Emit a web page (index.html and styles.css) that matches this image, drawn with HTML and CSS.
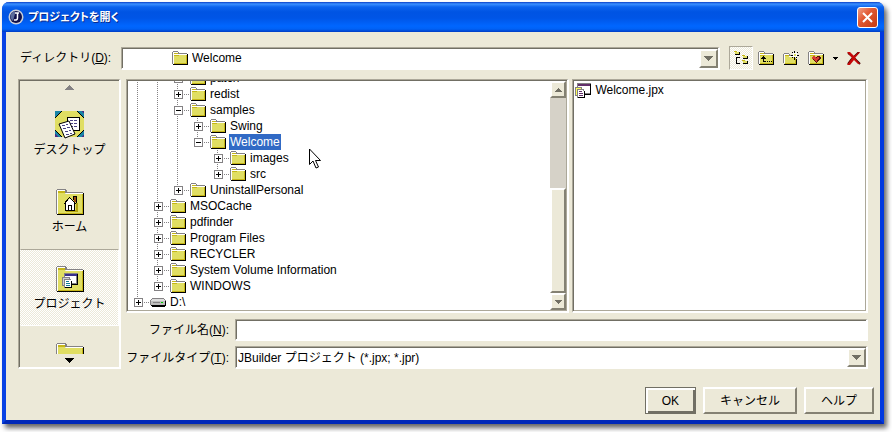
FILE: index.html
```html
<!DOCTYPE html>
<html lang="ja">
<head>
<meta charset="utf-8">
<title>プロジェクトを開く</title>
	<link rel="stylesheet" href="styles.css">
</head>
<body>

	<svg class="defs" width="0" height="0">
		<defs>
			<symbol id="folder" viewBox="0 0 16 14">
				<path fill="#848284" d="M1 0h5v1h1v1h8v1H0V1h1z"/>
				<path fill="#848284" d="M0 1h1v12H0z"/>
				<path fill="#fff" d="M1 1h5v1H1zM1 3h14v1H1zM1 2h1v11H1z"/>
				<path fill="#c6b618" d="M2 2h4v1H2z"/>
				<path fill="#e0de63" d="M2 4h12v8H2z"/>
				<path fill="#c6b618" d="M2 4h5v1H2zM14 4h1v9h-1zM2 12h13v1H2z"/>
				<path d="M15 3h1v11H1v-1h14z"/>
			</symbol>
			<symbol id="bigfolder" viewBox="0 0 28 26">
				<path fill="#848284" d="M1 0h9v1h1v2h16v1H9V1H1v24H0V1h1z"/>
				<path fill="#fff" d="M1 1h8v1H2v23H1zM10 4h17v1H10z"/>
				<path fill="#e0de63" d="M2 3h7v2h17v19H2z"/>
				<path fill="#c6b618" d="M2 2h7v2H2zM26 5h1v20H2v-1h24z"/>
				<path d="M27 4h1v22H1v-1h26z"/>
			</symbol>
			<symbol id="drive" viewBox="0 0 16 9">
				<path fill="#848284" d="M2 0h12v1h1v1h1v5H0V2h1V1h1z"/>
				<path fill="#dedede" d="M3 1h11v1H2V1zM1 2h14v1H1z"/>
				<path fill="#bdbdbd" d="M1 3h14v4H1z"/>
				<path fill="#848284" d="M3 4h7v1H3z"/>
				<path fill="#00d200" d="M11 4h2v1h-2z"/>
				<path d="M15 3h1v5h-1v1H2V8H1V7h14z"/>
			</symbol>
			<symbol id="project" viewBox="0 0 16 15">
				<path fill="#848284" d="M2 0h14v11H2z"/>
				<path fill="#fff" d="M3 3h12v7H3z"/>
				<path fill="#63306b" d="M3 1h12v2H3z"/>
				<path d="M15 1h1v11H9v-1h6z"/>
				<path fill="#848284" d="M0 4h7v9H0z"/>
				<path fill="#ffff5a" d="M1 5h5v7H1z"/>
				<path fill="#848284" d="M2 6h7v9H2z"/>
				<path fill="#fff" d="M3 7h5v1h1v6H3z"/>
				<path fill="#63306b" d="M4 8h3v1H4zM4 10h4v1H4zM4 12h4v1H4z"/>
				<path d="M9 8h1v7H3v-1h6z"/>
			</symbol>
			<symbol id="down" viewBox="0 0 9 5">
				<path d="M0 0h9v1H8v1H7v1H6v1H5v1H4V4H3V3H2V2H1V1H0z"/>
			</symbol>
			<symbol id="up" viewBox="0 0 9 5">
				<path d="M4 0h1v1h1v1h1v1h1v1h1v1H0V4h1V3h1V2h1V1h1z"/>
			</symbol>
		</defs>
	</svg>

	<div class="dialog">
		<header class="titlebar">
			<svg class="logo" width="16" height="16" viewBox="0 0 16 16">
				<circle cx="8" cy="8" r="7.5" fill="#c9ced8"/>
				<circle cx="8" cy="8" r="6" fill="#10104a"/>
				<path d="M3 5a6 6 0 0 1 4-3v3L5 12a6 6 0 0 1-2-7z" fill="#5c6c9c"/>
				<path d="M7 4h4M9.500 4v5q0 2.500-3.500 2" fill="none" stroke="#fff" stroke-width="1.500"/>
			</svg>
			<h1>プロジェクトを開く</h1>
			<button class="close" aria-label="閉じる">
				<svg width="11" height="11" viewBox="0 0 11 11"><path d="M1 1l9 9M10 1l-9 9" stroke="#fff" stroke-width="2"/></svg>
			</button>
		</header>

		<form class="content" onsubmit="return false">
			<div class="lookin">
				<label for="dir">ディレクトリ(<u>D</u>):</label>
				<div class="combo dir">
					<select id="dir"><option>Welcome</option></select>
					<svg class="dir-icon" width="16" height="14"><use href="#folder"/></svg>
					<span class="drop"><svg width="9" height="5"><use href="#down"/></svg></span>
				</div>
				<div class="tools">
					<button class="tool on" aria-label="ツリー">
						<svg width="15" height="14" viewBox="0 0 15 14">
							<path fill="#e0de63" d="M1 1h5v2H1zM9 5h4v2H9zM9 10h4v2H9z"/>
							<path fill="#c6b618" d="M0 0h3v1H0zM8 4h3v1H8zM8 9h3v1H8z"/>
							<path d="M5 1h1v3H1V3h4zM13 5h1v3H9V7h4zM13 10h1v3H9v-1h4zM2 6h4v1H3v5h3v1H2z"/>
						</svg>
					</button>
					<button class="tool" aria-label="上へ">
						<svg width="16" height="14" viewBox="0 0 16 14">
							<use href="#folder"/>
							<path d="M5 5h1v1h1v1h1v1H6v2h2v1H5V8H3V7h1V6h1zM9 10h1v1H9zM11 10h1v1h-1zM13 10h1v1h-1z"/>
						</svg>
					</button>
					<button class="tool" aria-label="新規フォルダ">
						<svg width="16" height="14" viewBox="0 0 16 14">
							<path fill="#848284" d="M1 2h5v1h1v1h6v1H1v7H0V3h1z"/>
							<path fill="#fff" d="M1 3h5v1H2v8H1zM6 5h8v1H6z"/>
							<path fill="#e0de63" d="M2 5h4v1h6v6H2z"/>
							<path fill="#c6b618" d="M2 4h4v1H2zM12 7h1v6H2v-1h10z"/>
							<path d="M13 8h1v6H1v-1h12z"/>
							<path fill="#fff" d="M10 2h4v4h-4z"/>
							<path d="M11 0h1v2h-1zM9 1h1v1H9zM14 1h1v1h-1zM8 4h2v1H8zM14 4h2v1h-2zM9 6h1v1H9zM13 6h1v1h-1zM11 6h1v3h-1z"/>
							<path fill="#e0de63" d="M11 3h2v2h-2z"/>
						</svg>
					</button>
					<button class="tool" aria-label="お気に入り">
						<svg width="16" height="14" viewBox="0 0 16 14">
							<use href="#folder"/>
							<path fill="#5a1010" d="M5 5h2v1h2V5h3v1h1v2h-1v1h-1v1h-1v1H9v1H8v-1H7v-1H6V9H5V8H4V6h1z"/>
							<path fill="#d63c31" d="M5 5h2v1h1v1h1V6h2v2h-1v1H9v2H8v-1H7V9H6V8H4V6h1z"/>
						</svg>
					</button>
					<button class="tool more" aria-label="お気に入りメニュー">
						<svg width="5" height="3" viewBox="0 0 5 3"><path d="M0 0h5v1H4v1H3v1H2V2H1V1H0z"/></svg>
					</button>
					<button class="tool" aria-label="削除">
						<svg class="smooth" width="15" height="13" viewBox="0 0 15 13">
							<path d="M12 0L4 8 1 12M1 1l4 3 8 8" fill="none" stroke="#4a0000" stroke-width="2"/>
							<path d="M0 0h3l4 4 5-4h1L8 6l5 6h-2L7 8l-4 5H0l5-7z" fill="#c60808"/>
						</svg>
					</button>
				</div>
			</div>

			<div class="main">
				<nav class="places">
					<button class="scroll" aria-label="上にスクロール" disabled><svg width="9" height="5"><use href="#up"/></svg></button>
					<div class="places-view">
						<button class="place">
							<svg width="29" height="28" viewBox="0 0 29 28">
								<path fill="#e0de63" d="M0 0h29v26H0z"/>
								<path fill="#1884a5" d="M0 0h7L0 7zM22 0h7v7zM0 19l7 7H0zM29 19v7h-7z"/>
								<path fill="#4a2c84" d="M0 23l3 3H0zM29 23v3h-3zM26 0h3v3z"/>
								<path fill="none" stroke="#000" d="M7 0L0 7M22 0l7 7M0 19l7 7M29 19l-7 7"/>
								<path fill="#fff" stroke="#000" d="M12.500 6.500h12v13h-12z"/>
								<path fill="none" stroke="#4a4284" stroke-dasharray="3 1" d="M15 9.500h7M15 12.500h7M15 15.500h7"/>
								<path class="smooth" fill="#fff" stroke="#000" d="M4 13l10-3 6 13-10 4z"/>
								<path fill="none" stroke="#4a4284" stroke-dasharray="3 1" d="M7 15l6-2M8 18l7-2M10 21l6-2M11 24l6-2"/>
							</svg>
							<span>デスクトップ</span>
						</button>
						<button class="place">
							<svg width="28" height="26" viewBox="0 0 28 26">
								<use href="#bigfolder"/>
								<path fill="#b5a510" d="M10 21h12v2H10zM20 14h2v8h-2z"/>
								<path fill="#fff" d="M9 14l5-5 5 5v7H9z"/>
								<path fill="#9c4a10" d="M18 8h2v5h-2z"/>
								<path d="M17 8h1v3h-1zM20 8h1v6h-1zM17 7h4v1h-4z"/>
								<path fill="none" stroke="#000" d="M7.500 15.500l6-7 7 7M9.500 14v7.500h9V14M12.500 21v-5h3v5"/>
							</svg>
							<span>ホーム</span>
						</button>
						<button class="place current">
							<svg width="28" height="26" viewBox="0 0 28 26">
								<use href="#bigfolder"/>
								<path fill="#848284" d="M8 7h14v11H8z"/>
								<path fill="#fff" d="M9 10h11v7H9z"/>
								<path fill="#39308c" d="M9 8h12v2H9z"/>
								<path d="M21 8h1v11h-7v-1h6z"/>
								<path fill="#848284" d="M6 11h8v9H6z"/>
								<path fill="#cecece" d="M7 12h6v7H7z"/>
								<path fill="#848284" d="M8 13h7v9H8z"/>
								<path fill="#fff" d="M9 14h6v7H9z"/>
								<path fill="#107b94" d="M10 15h3v1h-3zM10 17h4v1h-4zM10 19h4v1h-4z"/>
								<path d="M15 15h1v7H9v-1h6z"/>
							</svg>
							<span>プロジェクト</span>
						</button>
						<button class="place" aria-label="フォルダ">
							<svg width="28" height="26"><use href="#bigfolder"/></svg>
						</button>
					</div>
					<button class="scroll" aria-label="下にスクロール"><svg width="9" height="5"><use href="#down"/></svg></button>
				</nav>

				<div class="right">
					<div class="panes">
						<div class="pane tree-pane">
							<ul class="tree">
								<li><i></i><i></i><button class="box minus" aria-label="patch"></button><svg width="16" height="14"><use href="#folder"/></svg><span>patch</span></li>
								<li><i></i><i></i><button class="box" aria-label="redist"></button><svg width="16" height="14"><use href="#folder"/></svg><span>redist</span></li>
								<li><i></i><i></i><button class="box minus" aria-label="samples"></button><svg width="16" height="14"><use href="#folder"/></svg><span>samples</span></li>
								<li><i></i><i></i><i></i><button class="box" aria-label="Swing"></button><svg width="16" height="14"><use href="#folder"/></svg><span>Swing</span></li>
								<li><i></i><i></i><i></i><button class="box minus end" aria-label="Welcome"></button><svg width="16" height="14"><use href="#folder"/></svg><span class="selected">Welcome</span></li>
								<li><i></i><i></i><i></i><i class="none"></i><button class="box" aria-label="images"></button><svg width="16" height="14"><use href="#folder"/></svg><span>images</span></li>
								<li><i></i><i></i><i></i><i class="none"></i><button class="box end" aria-label="src"></button><svg width="16" height="14"><use href="#folder"/></svg><span>src</span></li>
								<li><i></i><i></i><button class="box end" aria-label="UninstallPersonal"></button><svg width="16" height="14"><use href="#folder"/></svg><span>UninstallPersonal</span></li>
								<li><i></i><button class="box" aria-label="MSOCache"></button><svg width="16" height="14"><use href="#folder"/></svg><span>MSOCache</span></li>
								<li><i></i><button class="box" aria-label="pdfinder"></button><svg width="16" height="14"><use href="#folder"/></svg><span>pdfinder</span></li>
								<li><i></i><button class="box" aria-label="Program Files"></button><svg width="16" height="14"><use href="#folder"/></svg><span>Program Files</span></li>
								<li><i></i><button class="box" aria-label="RECYCLER"></button><svg width="16" height="14"><use href="#folder"/></svg><span>RECYCLER</span></li>
								<li><i></i><button class="box" aria-label="System Volume Information"></button><svg width="16" height="14"><use href="#folder"/></svg><span>System Volume Information</span></li>
								<li><i></i><button class="box end" aria-label="WINDOWS"></button><svg width="16" height="14"><use href="#folder"/></svg><span>WINDOWS</span></li>
								<li><button class="box end" aria-label="D:\"></button><svg width="16" height="9"><use href="#drive"/></svg><span>D:\</span></li>
							</ul>
							<div class="scrollbar">
								<button aria-label="上"><svg width="7" height="4" viewBox="0 0 9 5"><use href="#up"/></svg></button>
								<div class="track"><div class="thumb"></div></div>
								<button aria-label="下"><svg width="7" height="4" viewBox="0 0 9 5"><use href="#down"/></svg></button>
							</div>
							<svg class="pointer" width="12" height="21" viewBox="0 0 12 21">
								<path fill="#fff" stroke="#000" d="M.5 1v15.500L4 13l3 7 2.500-1-3-6.500h5z"/>
							</svg>
						</div>
						<div class="pane files">
							<a href="#"><svg width="16" height="15"><use href="#project"/></svg>Welcome.jpx</a>
						</div>
					</div>

					<div class="fields">
						<label for="fname">ファイル名(<u>N</u>):</label>
						<input id="fname" type="text" autofocus autocomplete="off">
						<label for="ftype">ファイルタイプ(<u>T</u>):</label>
						<div class="combo">
							<select id="ftype"><option>JBuilder プロジェクト (*.jpx; *.jpr)</option></select>
							<span class="drop"><svg width="9" height="5"><use href="#down"/></svg></span>
						</div>
					</div>
				</div>
			</div>

			<footer class="actions">
				<button class="default">OK</button>
				<button>キャンセル</button>
				<button>ヘルプ</button>
			</footer>
		</form>
	</div>

</body>
</html>
```
FILE: styles.css
```css
* {
	box-sizing: border-box;
}
body {
	margin: 0;
	padding: 2px 8px 8px 2px;
	min-height: 100vh;
	display: flex;
	background: #fff;
	overflow: hidden;
}
body, button, input, select {
	font: 12px/16px "Liberation Sans", "Noto Sans CJK JP", sans-serif;
	color: #000;
}
button {
	padding: 0;
	border: 0;
	background: none;
}
svg {
	display: block;
	flex: none;
	shape-rendering: crispEdges;
}
.defs {
	position: absolute;
}
.smooth, .logo {
	shape-rendering: auto;
}

.dialog {
	flex: 1;
	display: flex;
	flex-direction: column;
	border: 4px solid;
	border-top: 0;
	border-color: #0047e0 #0038e0 #0028b8 #0842e4;
	border-radius: 7px 7px 0 0;
	background: #ece9d8;
	box-shadow: 3px 4px 5px rgba(0,0,0,.6);
}

/* title bar */
.titlebar {
	display: flex;
	align-items: center;
	height: 30px;
	margin: 0 -4px;
	padding: 0 6px;
	border-radius: 7px 7px 0 0;
	background: linear-gradient(#0a3fc8 0, #3b90ff 2px, #0c63ee 5px, #0054e3 10px, #0055e6 16px, #0066ff 24px, #0062f6 27px, #003cc4 30px);
}
.titlebar h1 {
	flex: 1;
	margin: 0 0 0 4px;
	font-size: 11px;
	line-height: 16px;
	font-weight: bold;
	font-feature-settings: "palt";
	color: #fff;
	text-shadow: 1px 1px #0a2a8c;
}
.close {
	display: flex;
	align-items: center;
	justify-content: center;
	width: 21px;
	height: 21px;
	border: 1px solid #fff;
	border-radius: 3px;
	background: linear-gradient(135deg, #f0a088, #e25a35 40%, #c63a10);
}
.close svg {
	shape-rendering: auto;
}

.content {
	flex: 1;
	display: flex;
	flex-direction: column;
	padding: 14px 12px 6px;
}

/* sunken frames, light line outside and dark line inside */
.combo, .places, .pane, .fields input {
	border: 2px solid #fff;
	border-width: 1px 2px 2px 1px;
	border-color: #aca899 #fff #fff #aca899;
	box-shadow: inset 1px 1px #716f64;
}

/* directory row */
.lookin {
	display: flex;
	align-items: center;
	height: 24px;
	margin-bottom: 9px;
}
.lookin label {
	width: 103px;
	padding-left: 2px;
	white-space: nowrap;
}
.combo {
	position: relative;
	display: flex;
	height: 23px;
	padding: 1px 20px 0 1px;
	background: #fff;
}
.combo select {
	flex: 1;
	min-width: 0;
	padding: 0 1px;
	border: 0;
	outline: 0;
	appearance: none;
	background: none;
}
.dir {
	flex: 1;
	margin-right: 9px;
}
.dir select {
	padding-left: 69px;
}
.dir-icon {
	position: absolute;
	left: 50px;
	top: 3px;
}
.drop, .scrollbar button, .thumb {
	border: 2px solid;
	border-color: #fff #848173 #848173 #fff;
	background: #ece9d8;
}
.drop {
	position: absolute;
	top: 1px;
	right: 0;
	bottom: 0;
	width: 19px;
	display: flex;
	align-items: center;
	justify-content: center;
	pointer-events: none;
}
.drop svg, .scrollbar svg {
	fill: #716f64;
}
.tools {
	display: flex;
	gap: 1px;
	padding-right: 2px;
}
.tool {
	display: flex;
	align-items: center;
	justify-content: center;
	width: 24px;
	height: 24px;
}
.more {
	width: 12px;
}
.on, .current {
	background: repeating-conic-gradient(#fff 0 25%, #ece9d8 0 50%) 0 0 / 2px 2px;
}
.on {
	border: 1px solid;
	border-color: #aca899 #fff #fff #aca899;
}

.main {
	flex: 1;
	display: flex;
	gap: 5px;
}

/* shortcuts on the left */
.places {
	width: 103px;
	display: flex;
	flex-direction: column;
	padding: 1px 0 0 1px;
}
.scroll {
	display: flex;
	align-items: center;
	justify-content: center;
	height: 13px;
}
.scroll:disabled {
	fill: #848284;
}
.places-view {
	flex: 1 1 0;
	min-height: 0;
	padding-top: 1px;
	overflow: hidden;
}
.place {
	display: flex;
	flex-direction: column;
	align-items: center;
	gap: 3px;
	width: 100%;
	height: 77px;
	padding-top: 15px;
	border: 1px solid transparent;
}
.place svg {
	height: 28px;
}
.current {
	border-color: #aca899 #fff #fff transparent;
}

/* tree and file list */
.right {
	flex: 1;
	display: flex;
	flex-direction: column;
	gap: 6px;
}
.panes {
	flex: 1;
	display: grid;
	grid-template-columns: 3fr 2fr;
	gap: 3px;
}
.pane {
	position: relative;
	background: #fff;
	box-shadow: inset 1px 1px #716f64, inset -1px -1px #aca899;
}
.tree-pane {
	display: flex;
	padding: 1px;
}
.files {
	padding: 2px;
}
.files a {
	display: flex;
	align-items: center;
	gap: 4px;
	color: #000;
	text-decoration: none;
}
.tree {
	flex: 1;
	height: 0;
	min-height: 100%;
	margin: 0;
	padding: 0;
	list-style: none;
	overflow: hidden;
	display: flex;
	flex-direction: column;
	justify-content: flex-end;
}
.tree li {
	flex: none;
	display: flex;
	align-items: center;
	height: 16px;
}
.tree i, .box {
	flex: none;
	width: 20px;
	height: 16px;
	background: repeating-linear-gradient(#848284 0 1px, transparent 1px 2px) 9px 0 / 1px 16px no-repeat;
}
.tree i.none {
	background: none;
}
.box {
	width: 22px;
	background:
		linear-gradient(#000, #000) 8px 8px / 5px 1px no-repeat,
		linear-gradient(#000, #000) 10px 6px / 1px 5px no-repeat,
		linear-gradient(#fff, #fff) 7px 5px / 7px 7px no-repeat,
		linear-gradient(#848284, #848284) 6px 4px / 9px 9px no-repeat,
		repeating-linear-gradient(90deg, #848284 0 1px, transparent 1px 2px) 16px 8px / 6px 1px no-repeat,
		repeating-linear-gradient(#848284 0 1px, transparent 1px 2px) 9px 0 / 1px 16px no-repeat;
}
.minus {
	background-size: 5px 1px, 0 0, 7px 7px, 9px 9px, 6px 1px, 1px 16px;
}
.end {
	background-size: 5px 1px, 1px 5px, 7px 7px, 9px 9px, 6px 1px, 1px 8px;
}
.minus.end {
	background-size: 5px 1px, 0 0, 7px 7px, 9px 9px, 6px 1px, 1px 8px;
}
.tree span {
	margin-left: 3px;
	padding: 0 1px;
	white-space: nowrap;
}
.tree .selected {
	background: #316ac5;
	color: #fff;
}
.scrollbar {
	width: 16px;
	display: flex;
	flex-direction: column;
	background: #d6d2c8;
}
.scrollbar button {
	display: flex;
	align-items: center;
	justify-content: center;
	height: 17px;
}
.track {
	flex: 1;
	display: flex;
	flex-direction: column;
	justify-content: flex-end;
}
.thumb {
	height: 54%;
}
.pointer {
	position: absolute;
	left: 182px;
	top: 68px;
	shape-rendering: auto;
}

.fields {
	display: grid;
	grid-template-columns: 103px 1fr;
	gap: 5px 6px;
	align-items: center;
}
.fields label {
	text-align: right;
	white-space: nowrap;
}
.fields input {
	width: 100%;
	height: 22px;
	padding: 0 2px;
	outline: 0;
	background: #fff;
}

/* bottom buttons */
.actions {
	display: flex;
	justify-content: flex-end;
	gap: 7px;
	margin: 18px -6px 0 0;
}
.actions button {
	height: 27px;
	padding: 0 15px;
	border: 2px solid;
	border-color: #fff #848173 #848173 #fff;
}
.actions .default {
	padding: 0 16px;
	border: 1px solid #716f64;
	box-shadow: inset 2px 2px #fff, inset -2px -2px #716f64;
}
```
